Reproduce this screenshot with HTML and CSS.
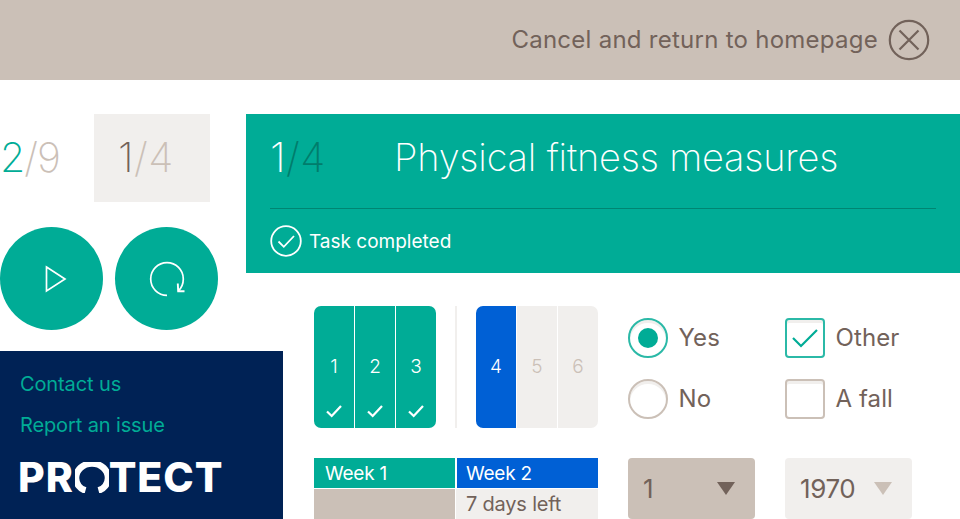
FILE: index.html
```html
<!DOCTYPE html>
<html lang="en">
<head>
<meta charset="utf-8">
<title>Protect</title>
<link rel="stylesheet" href="styles.css">
</head>
<body>
<header class="topbar">
  <span class="cancel-text">Cancel and return to homepage</span>
  <svg class="cancel-icon" width="42" height="42" viewBox="0 0 42 42" fill="none"><circle cx="21" cy="21" r="19.2" stroke="#72625a" stroke-width="2.2"/><path d="M11.500 11.500 30.500 30.500M30.500 11.500 11.500 30.500" stroke="#72625a" stroke-width="2.2"/></svg>
</header>
<main class="layout">
  <aside class="side">
    <div class="counters">
      <div class="count-total"><span class="teal">2</span><span class="beige">/9</span></div>
      <div class="count-box"><span class="brown">1</span><span class="beige">/4</span></div>
    </div>
    <div class="round-buttons">
      <div class="round">
        <svg class="play" width="24" height="28" viewBox="0 0 24 28" fill="none"><path d="M2.500 2 21 14 2.500 26Z" stroke="#fff" stroke-width="1.700"/></svg>
      </div>
      <div class="round">
        <svg width="38" height="38" viewBox="0 0 38 38" fill="none"><path d="M19 35.300A16.300 16.300 0 1 1 35.300 19C35.300 23.500 33.500 28 30.200 31" stroke="#fff" stroke-width="1.700"/><path d="M29.800 23.500 30.200 31.200H36.500" stroke="#fff" stroke-width="1.900"/></svg>
      </div>
    </div>
    <nav class="panel">
      <a class="panel-link">Contact us</a>
      <a class="panel-link">Report an issue</a>
      <div class="logo">PR<svg class="logo-o" width="34" height="31" viewBox="0 0 34 31" fill="none"><path d="M10.500 28.500A13 13 0 0 1 1 16C1 8 8 1.500 17 1.500S33 8 33 16A13 13 0 0 1 23.500 28.500" stroke="#fff" stroke-width="6.500"/></svg>TECT</div>
    </nav>
  </aside>
  <section class="content">
    <div class="card">
      <div class="card-head">
        <div class="card-count"><span>1</span><span class="dark">/4</span></div>
        <h1 class="card-title">Physical fitness measures</h1>
      </div>
      <div class="card-status">
        <svg width="32" height="32" viewBox="0 0 32 32" fill="none"><circle cx="16" cy="16" r="14.800" stroke="#fff" stroke-width="1.800"/><path d="M8.500 16.500 13.800 21.800 24 11" stroke="#fff" stroke-width="1.800"/></svg>
        <span>Task completed</span>
      </div>
    </div>
    <div class="widgets">
      <div class="col-steps">
        <div class="steps">
          <div class="group">
            <div class="seg done"><span>1</span><svg class="tick" width="16" height="14" viewBox="0 0 16 14" fill="none"><path d="M1 7.500 5.700 12 15 2" stroke="#fff" stroke-width="2.200"/></svg></div>
            <div class="seg done"><span>2</span><svg class="tick" width="16" height="14" viewBox="0 0 16 14" fill="none"><path d="M1 7.500 5.700 12 15 2" stroke="#fff" stroke-width="2.200"/></svg></div>
            <div class="seg done"><span>3</span><svg class="tick" width="16" height="14" viewBox="0 0 16 14" fill="none"><path d="M1 7.500 5.700 12 15 2" stroke="#fff" stroke-width="2.200"/></svg></div>
          </div>
          <div class="divider"></div>
          <div class="group">
            <div class="seg current"><span>4</span></div>
            <div class="seg todo"><span>5</span></div>
            <div class="seg todo"><span>6</span></div>
          </div>
        </div>
        <div class="weeks">
          <div class="week-head teal-bg">Week 1</div>
          <div class="week-head blue-bg">Week 2</div>
          <div class="week-cell beige-bg"></div>
          <div class="week-cell light-bg">7 days left</div>
        </div>
      </div>
      <div class="col-form">
        <div class="options">
          <div class="option"><span class="radio on"><span class="dot"></span></span><span class="opt-label">Yes</span></div>
          <div class="option"><span class="check on"><svg width="28" height="22" viewBox="0 0 28 22" fill="none"><path d="M2 11 10 19 26 3" stroke="#00ac96" stroke-width="2.200"/></svg></span><span class="opt-label">Other</span></div>
          <div class="option"><span class="radio"></span><span class="opt-label">No</span></div>
          <div class="option"><span class="check"></span><span class="opt-label">A fall</span></div>
        </div>
        <div class="selects">
          <div class="select beige-bg"><span>1</span><span class="caret caret-dark"></span></div>
          <div class="select light-bg"><span class="year">1970</span><span class="caret caret-light"></span></div>
        </div>
      </div>
    </div>
  </section>
</main>
</body>
</html>
```

FILE: styles.css
```css
* { box-sizing: border-box; }
html, body { margin: 0; height: 519px; overflow: hidden; background: #fff; }
body { font-family: Inter, "Noto Sans", sans-serif; color: #72625a; }
.topbar { height: 80px; background: #cbc0b7; display: flex; align-items: center; justify-content: flex-end; gap: 10px; padding-right: 30px; }
.cancel-text { font-size: 24px; letter-spacing: 0.26px; padding-bottom: 2px; }
.cancel-icon { display: block; }
.layout { display: flex; padding-top: 34px; }
.side { width: 246px; flex: none; }
.counters { display: flex; align-items: center; height: 88px; }
.count-total { width: 94px; padding-bottom: 2px; font-size: 41px; font-weight: 200; letter-spacing: -1px; }
.count-box { width: 116px; height: 88px; background: #f1efed; display: flex; align-items: center; padding: 0 0 2px 24px; font-size: 41px; font-weight: 200; letter-spacing: 0.4px; }
.teal { color: #00ac96; }
.beige { color: #cbc0b7; }
.brown { color: #72625a; }
.round-buttons { display: flex; gap: 12px; margin-top: 25px; }
.round { width: 103px; height: 103px; border-radius: 50%; background: #00ac96; display: flex; align-items: center; justify-content: center; }
.play { margin-left: 8px; }
.panel { width: 283px; height: 168px; margin-top: 21px; background: #002255; padding: 21px 0 0 20px; display: flex; flex-direction: column; }
.panel-link { color: #00ac96; font-size: 20px; line-height: 24px; margin-bottom: 17px; letter-spacing: -0.12px; }
.logo { color: #fff; font-size: 41px; font-weight: 800; line-height: 36px; letter-spacing: 0.9px; display: flex; align-items: center; margin: 5px 0 0 -2px; }
.logo-o { margin: 0 0 0 1px; }
.content { flex: 1; min-width: 0; }
.card { height: 159px; background: #00ac96; color: #fff; padding: 0 24px; }
.card-head { height: 95px; border-bottom: 1px solid #008572; display: flex; align-items: center; padding-bottom: 8px; }
.card-count { width: 124px; font-size: 41px; font-weight: 200; letter-spacing: 0.4px; }
.dark { color: #007d6c; }
.card-title { margin: 0; font-size: 38px; font-weight: 200; letter-spacing: -0.2px; }
.card-status { display: flex; align-items: center; gap: 7px; height: 64px; font-size: 19px; }
.widgets { display: flex; gap: 30px; padding: 33px 0 0 68px; }
.col-steps { width: 284px; flex: none; }
.steps { display: flex; height: 122px; justify-content: space-between; }
.group { display: flex; gap: 1px; width: 122px; border-radius: 7px; overflow: hidden; }
.divider { width: 2px; background: #f1efed; }
.seg { flex: 1; position: relative; display: flex; align-items: center; justify-content: center; font-size: 19px; font-weight: 300; padding-bottom: 2px; }
.seg.done { background: #00ac96; color: #fff; }
.seg.current { background: #0060d5; color: #fff; }
.seg.todo { background: #f1efed; color: #cbc0b7; }
.tick { position: absolute; left: 12px; bottom: 10px; }
.weeks { margin-top: 30px; display: grid; grid-template-columns: 141px 143px; grid-template-rows: 30px 30px; row-gap: 1px; }
.week-head { color: #fff; font-size: 19px; line-height: 30px; padding: 1px 0 0 11px; letter-spacing: -0.25px; }
.week-cell { font-size: 20px; line-height: 30px; padding-left: 11px; letter-spacing: -0.2px; }
.teal-bg { background: #00ac96; }
.blue-bg { background: #0060d5; border-left: 2px solid #fff; padding-left: 9px; }
.beige-bg { background: #cbc0b7; }
.light-bg { background: #f1efed; }
.week-cell.light-bg { padding-left: 10px; border-left: 1px solid #fff; }
.col-form { width: 284px; flex: none; }
.options { display: grid; grid-template-columns: 157px 127px; grid-template-rows: 40px 40px; row-gap: 21px; margin-top: 12px; height: 122px; }
.option { display: flex; align-items: center; gap: 11px; font-size: 24px; }
.opt-label { padding-bottom: 2px; letter-spacing: 0.1px; margin-left: -0.5px; }
.radio { width: 40px; height: 40px; border-radius: 50%; border: 2px solid #cbc0b7; box-shadow: inset 0 3px 0 #f1efed; display: flex; align-items: center; justify-content: center; }
.radio.on { border-color: #2bb9a7; }
.dot { width: 20px; height: 20px; border-radius: 50%; background: #00ac96; }
.check { width: 40px; height: 40px; border-radius: 4px; border: 2px solid #cbc0b7; box-shadow: inset 0 3px 0 #f1efed; display: flex; align-items: center; justify-content: center; }
.check.on { border-color: #2bb9a7; }
.selects { display: flex; gap: 30px; margin-top: 18px; }
.select { width: 127px; height: 61px; border-radius: 4px; display: flex; align-items: center; justify-content: space-between; padding: 0 20px 0 15px; font-size: 26px; }
.year { letter-spacing: -0.4px; }
.caret { width: 0; height: 0; border-left: 9px solid transparent; border-right: 9px solid transparent; border-top: 13px solid; }
.caret-dark { border-top-color: #72625a; }
.caret-light { border-top-color: #cbc0b7; }
```
